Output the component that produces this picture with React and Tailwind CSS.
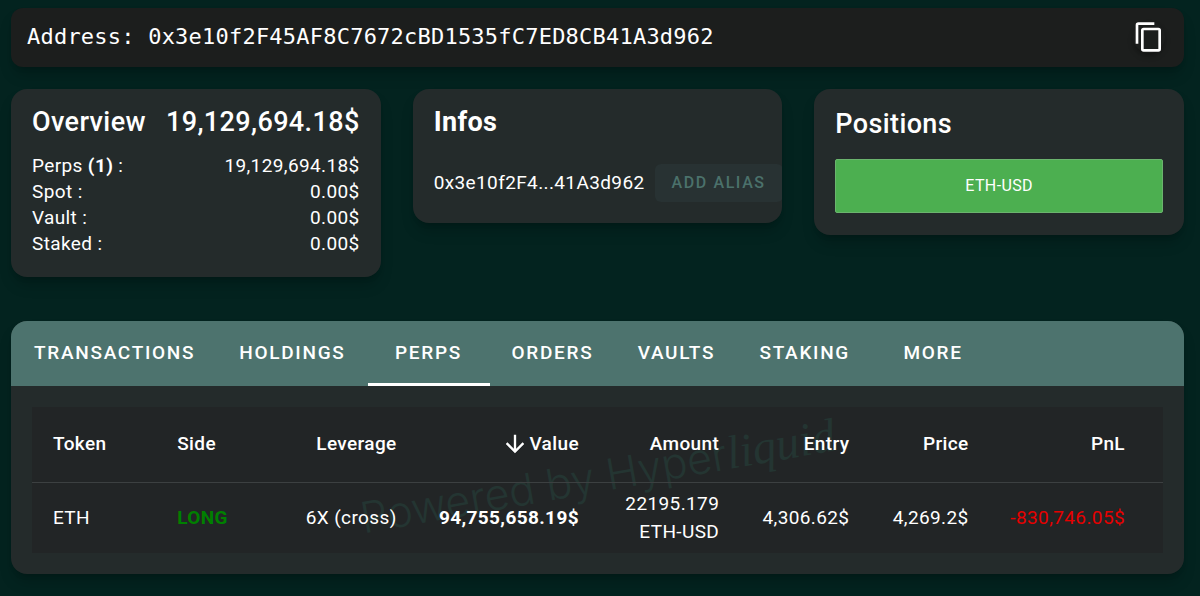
import React, { useState } from "react";

const address = "0x3e10f2F45AF8C7672cBD1535fC7ED8CB41A3d962";

const balances = [
  { label: "Perps", count: 1, value: "19,129,694.18$" },
  { label: "Spot", value: "0.00$" },
  { label: "Vault", value: "0.00$" },
  { label: "Staked", value: "0.00$" },
];

const tabs = [
  "Transactions",
  "Holdings",
  "Perps",
  "Orders",
  "Vaults",
  "Staking",
  "More",
];

const columns = [
  { name: "Token", className: "w-[124px] text-left" },
  { name: "Side", className: "w-[122px] text-left" },
  { name: "Leverage", className: "w-[139px] text-right" },
  { name: "Value", className: "w-[182px] text-right", sorted: true },
  { name: "Amount", className: "w-[140px] text-right" },
  { name: "Entry", className: "w-[130px] text-right" },
  { name: "Price", className: "w-[119px] text-right" },
  { name: "PnL", className: "w-[173px] pr-[38px] text-right" },
];

const perps = [
  {
    token: "ETH",
    side: "LONG",
    leverage: "6X (cross)",
    value: "94,755,658.19$",
    amount: "22195.179 ETH-USD",
    entry: "4,306.62$",
    price: "4,269.2$",
    pnl: "-830,746.05$",
  },
];

const CopyIcon = () => (
  <svg className="h-8 w-8" viewBox="0 0 24 24" fill="currentColor">
    <path d="M19 21H8V7h11m0-2H8a2 2 0 0 0-2 2v14a2 2 0 0 0 2 2h11a2 2 0 0 0 2-2V7a2 2 0 0 0-2-2m-3-4H4a2 2 0 0 0-2 2v14h2V3h12V1Z" />
  </svg>
);

const SortArrow = () => (
  <svg className="h-7 w-7" viewBox="0 0 24 24" fill="currentColor">
    <path d="M11 4h2v12l5.500-5.500 1.420 1.420L12 19.840l-7.920-7.920L5.500 10.500 11 16V4Z" />
  </svg>
);

const Card = ({ children }) => (
  <section className="overflow-hidden rounded-2xl bg-[#242b2b] px-[21px] shadow-lg shadow-black/20">
    {children}
  </section>
);

const AddressBar = () => (
  <header className="flex h-[59px] items-center justify-between rounded-xl bg-[#1c1e1d] pr-[19px] pb-px pl-4 shadow-lg shadow-black/20">
    <p className="pb-[2px] font-['DejaVu_Sans_Mono',monospace] text-[22px] tracking-[0.01em]">
      Address: {address}
    </p>
    <button
      type="button"
      aria-label="Copy address"
      className="rounded-full shadow-md shadow-black/25"
      onClick={() => navigator.clipboard?.writeText(address)}
    >
      <CopyIcon />
    </button>
  </header>
);

const Overview = () => (
  <Card>
    <div className="flex justify-between pt-[17px] text-[27px] leading-8 font-medium">
      <h2>Overview</h2>
      <span>19,129,694.18$</span>
    </div>
    <dl className="pt-[15px] pb-5 leading-[26px]">
      {balances.map((item) => (
        <div key={item.label} className="flex justify-between">
          <dt>
            {item.label} {item.count && <b>({item.count})</b>} :
          </dt>
          <dd>{item.value}</dd>
        </div>
      ))}
    </dl>
  </Card>
);

const Infos = () => (
  <Card>
    <h2 className="pt-[17px] text-[27px] leading-8 font-bold">Infos</h2>
    <div className="flex items-center gap-[10px] pt-[26px] pb-[21px] whitespace-nowrap">
      <span>
        {address.slice(0, 10)}...{address.slice(-8)}
      </span>
      <button
        type="button"
        className="h-[38px] shrink-0 rounded-md bg-[#283233] px-[17px] text-[16px] font-medium tracking-widest text-[#4b716b] uppercase"
      >
        Add alias
      </button>
    </div>
  </Card>
);

const Positions = () => (
  <Card>
    <h2 className="pt-[19px] text-[27px] leading-8 font-medium">Positions</h2>
    <div className="pt-[19px] pb-[22px]">
      <button
        type="button"
        className="h-[54px] w-full rounded-xs border border-[#6bb46e] bg-[#4caf50] text-[16px]"
      >
        ETH-USD
      </button>
    </div>
  </Card>
);

const PerpsTable = () => (
  <div className="relative bg-[#222526]">
    {/* Watermark behind the rows */}
    <div className="pointer-events-none absolute inset-0 flex items-center justify-center pb-2">
      <span className="-rotate-10 font-[Inter,sans-serif] text-[43px] font-light tracking-normal whitespace-nowrap text-[#243532]">
        Powered by Hyper
        <i className="font-['Liberation_Serif',serif] text-[47px]">liquid</i>
      </span>
    </div>
    <table className="relative w-full table-fixed">
      <thead>
        <tr className="h-[75px] border-b border-[#3c4041]">
          {columns.map((col) => (
            <th
              key={col.name}
              scope="col"
              className={`px-[21px] font-medium ${col.className}`}
            >
              {col.sorted ? (
                <span className="flex items-center justify-end">
                  <SortArrow />
                  {col.name}
                </span>
              ) : (
                col.name
              )}
            </th>
          ))}
        </tr>
      </thead>
      <tbody>
        {perps.map((row) => (
          <tr key={row.token} className="h-[71px] text-right">
            <td className="px-[21px] text-left">{row.token}</td>
            <td className="px-[21px] text-left font-bold text-[#008000]">
              {row.side}
            </td>
            <td className="pr-[21px] whitespace-nowrap">{row.leverage}</td>
            <td className="pr-[21px] font-bold">{row.value}</td>
            <td className="px-[21px] leading-7">{row.amount}</td>
            <td className="pr-[21px]">{row.entry}</td>
            <td className="pr-[21px]">{row.price}</td>
            <td className="pr-[38px] text-[#e60000]">{row.pnl}</td>
          </tr>
        ))}
      </tbody>
    </table>
  </div>
);

const App = () => {
  const [activeTab, setActiveTab] = useState("Perps");

  return (
    <div className="min-h-screen bg-[#03231f] pt-2 pr-4 pb-5 pl-[11px] font-[Roboto,sans-serif] text-[19px] tracking-[0.02em] text-white">
      <AddressBar />

      <div className="mt-[22px] grid grid-cols-3 items-start gap-8">
        <Overview />
        <Infos />
        <Positions />
      </div>

      <section className="mt-11 overflow-hidden rounded-2xl bg-[#242b2b] shadow-lg shadow-black/20">
        <nav className="flex h-[65px] bg-[#4d736e] pl-px" role="tablist">
          {tabs.map((tab) => (
            <button
              key={tab}
              type="button"
              role="tab"
              aria-selected={activeTab === tab}
              onClick={() => setActiveTab(tab)}
              className={`min-w-[122px] border-b-3 px-[22px] pt-[2px] font-medium tracking-[0.09em] uppercase ${
                activeTab === tab ? "border-white" : "border-transparent"
              }`}
            >
              {tab}
            </button>
          ))}
        </nav>
        <div className="p-[21px]">
          <PerpsTable />
        </div>
      </section>
    </div>
  );
};

export default App;
